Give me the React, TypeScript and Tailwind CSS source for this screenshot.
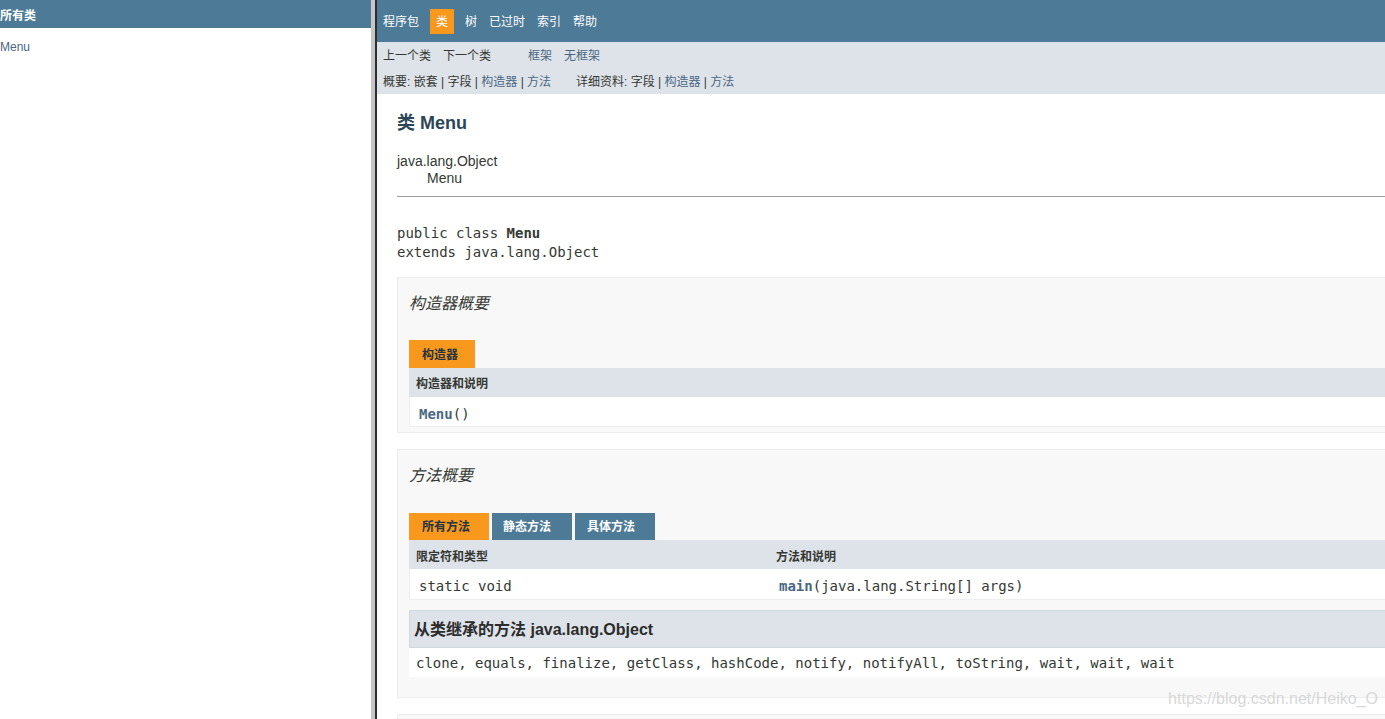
import React from "react";

const sans = "font-['Liberation_Sans','Noto_Sans_CJK_SC',Arial,sans-serif]";
const mono = "font-['DejaVu_Sans_Mono','Liberation_Mono',monospace]";

function Sep() {
  return <span className="text-[#353833]"> | </span>;
}

export default function App() {
  return (
    <div className={`flex h-[719px] w-[1385px] overflow-hidden bg-white ${sans} text-[#353833]`}>
      {/* Left frame */}
      <div className="flex w-[371px] shrink-0 flex-col bg-white">
        <div className="flex h-[28px] items-center bg-[#4d7a97] pt-[3px] text-[12px] font-bold text-white">所有类</div>
        <div className="mt-[11px] text-[12px] leading-[17px] text-[#4a6782]">Menu</div>
      </div>
      {/* divider */}
      <div className="w-[4px] shrink-0 bg-[#c6c6c6]" />
      <div className="w-[2px] shrink-0 bg-[#2e2e2e]" />
      {/* Right frame */}
      <div className="relative flex min-w-0 flex-1 flex-col overflow-hidden bg-white">
        {/* top nav */}
        <div className="flex h-[42px] shrink-0 items-center bg-[#4d7a97] pl-[6px] text-[12px] text-white">
          <span className="pt-[2px]">程序包</span>
          <span className="ml-[11px] flex h-[25px] items-center bg-[#f8981d] px-[6px] pt-[2px] text-white">类</span>
          <span className="ml-[11px] pt-[2px]">树</span>
          <span className="ml-[12px] pt-[2px]">已过时</span>
          <span className="ml-[12px] pt-[2px]">索引</span>
          <span className="ml-[12px] pt-[2px]">帮助</span>
        </div>
        {/* sub nav */}
        <div className="flex shrink-0 flex-col bg-[#dee3e9] pl-[6px] text-[12px]">
          <div className="flex h-[26px] items-center pt-[2px]">
            <div className="flex w-[145px] gap-[12px] text-[#353833]">
              <span>上一个类</span>
              <span>下一个类</span>
            </div>
            <div className="flex gap-[12px] text-[#4a6782]">
              <span>框架</span>
              <span>无框架</span>
            </div>
          </div>
          <div className="flex h-[26px] items-center pt-[2px]">
            <div className="w-[193px] whitespace-pre">
              <span>概要: 嵌套</span>
              <Sep />
              <span>字段</span>
              <Sep />
              <span className="text-[#4a6782]">构造器</span>
              <Sep />
              <span className="text-[#4a6782]">方法</span>
            </div>
            <div className="whitespace-pre">
              <span>详细资料: 字段</span>
              <Sep />
              <span className="text-[#4a6782]">构造器</span>
              <Sep />
              <span className="text-[#4a6782]">方法</span>
            </div>
          </div>
        </div>
        {/* content */}
        <div className="flex flex-col pl-[20px]">
          <div className="flex h-[56px] items-center pt-[2px] text-[18px] font-bold text-[#2c4557]">类 Menu</div>
          <div className="pt-[3px] text-[14px] leading-[17px]">
            <div>java.lang.Object</div>
            <div className="pl-[30px]">Menu</div>
          </div>
          <div className="mt-[9px] h-px bg-[#9e9e9e]" />
          <div className={`mt-[27px] ${mono} text-[14px] leading-[19px]`}>
            <div>
              public class <span className="font-bold">Menu</span>
            </div>
            <div>extends java.lang.Object</div>
          </div>

          {/* constructor summary */}
          <div className="-mr-[20px] mt-[15px] border border-[#ededed] bg-[#f8f8f8] pb-[5px] pl-[11px]">
            <div className="flex h-[48px] items-center pt-[3px] text-[16px] italic">构造器概要</div>
            <div className="mt-[14px] flex h-[28px] w-[66px] items-center bg-[#f8981d] pl-[13px] pt-[1px] text-[12px] font-bold text-[#253441]">
              构造器
            </div>
            <div className="border border-t-0 border-[#eeeeee] bg-white">
              <div className="-mx-px flex h-[29px] items-center bg-[#dee3e9] pl-[7px] pt-[2px] text-[12px] font-bold">构造器和说明</div>
              <div className={`flex h-[29px] items-center pl-[9px] pt-[5px] ${mono} text-[14px]`}>
                <span className="font-bold text-[#4a6782]">Menu</span>()
              </div>
            </div>
          </div>

          {/* method summary */}
          <div className="-mr-[20px] mt-[16px] border border-[#ededed] bg-[#f8f8f8] pb-[20px] pl-[11px]">
            <div className="flex h-[48px] items-center pt-[3px] text-[16px] italic">方法概要</div>
            <div className="mt-[14px] flex h-[28px] gap-[3px] pt-[1px] text-[12px] font-bold">
              <div className="flex w-[80px] items-center bg-[#f8981d] pl-[13px] text-[#253441]">所有方法</div>
              <div className="flex w-[80px] items-center bg-[#4d7a97] pl-[11px] text-white">静态方法</div>
              <div className="flex w-[80px] items-center bg-[#4d7a97] pl-[12px] text-white">具体方法</div>
            </div>
            <div className="border border-t-0 border-[#eeeeee] bg-white">
              <div className="-mx-px flex h-[29px] items-center bg-[#dee3e9] pt-[4px] text-[12px] font-bold">
                <div className="w-[360px] pl-[7px]">限定符和类型</div>
                <div className="pl-[7px]">方法和说明</div>
              </div>
              <div className={`flex h-[30px] items-center pt-[5px] ${mono} text-[14px]`}>
                <div className="w-[359px] pl-[9px]">static void</div>
                <div className="pl-[10px]">
                  <span className="font-bold text-[#4a6782]">main</span>(java.lang.String[] args)
                </div>
              </div>
            </div>
            <div className="mt-[10px] border border-[#d0d9e0] bg-[#dee3e9]">
              <div className="flex h-[36px] items-center pl-[4px] pt-[1px] text-[16px] font-bold text-[#2c2c2c]">
                从类继承的方法 java.lang.Object
              </div>
            </div>
            <div className={`flex h-[29px] items-center bg-white pl-[7px] pt-[1px] ${mono} text-[14px]`}>
              clone, equals, finalize, getClass, hashCode, notify, notifyAll, toString, wait, wait, wait
            </div>
          </div>

          {/* next block */}
          <div className="-mr-[20px] mt-[16px] h-[60px] border border-[#ededed] bg-[#f8f8f8]" />
        </div>
        <div className={`absolute bottom-[8px] right-[7px] text-[16px] text-[#d8d8d8] ${sans}`}>
          https://blog.csdn.net/Heiko_O
        </div>
      </div>
    </div>
  );
}
